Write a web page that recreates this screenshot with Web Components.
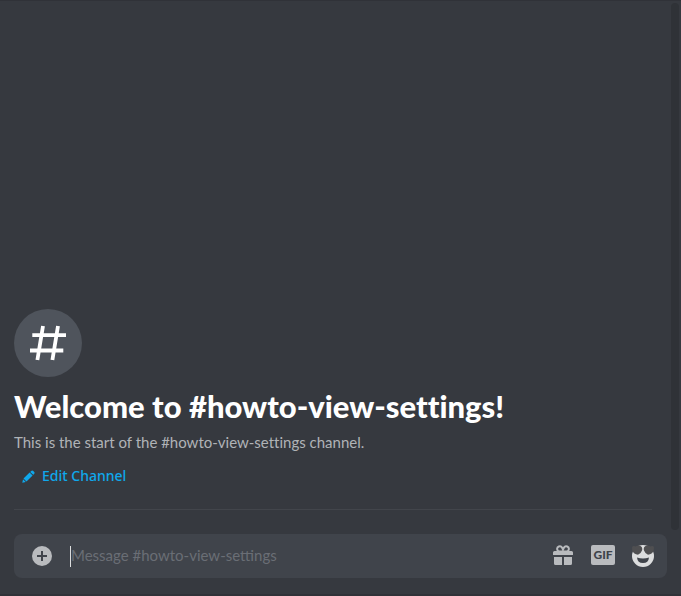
<!DOCTYPE html>
<html lang="en">
<head>
<meta charset="utf-8">
<title>howto-view-settings</title>
<style>
html, body { height: 100%; margin: 0; background: #36393f; }
body { font-family: Lato, "Noto Sans", sans-serif; font-variant-ligatures: none; }
</style>
</head>
<body>
<channel-page></channel-page>
<script>
const define = (name, html) => {
  const template = document.createElement('template');
  template.innerHTML = html;
  customElements.define(name, class extends HTMLElement {
    constructor() {
      super();
      this.attachShadow({ mode: 'open' }).append(template.content.cloneNode(true));
    }
  });
};

define('channel-badge', `
<style>
:host { display: grid; place-items: center; width: 68px; height: 68px; border-radius: 50%; background: #4f545c; }
svg { display: block; }
</style>
<svg width="40" height="40" viewBox="0 0 40 40" fill="none" stroke="#fff" stroke-width="3.8" aria-hidden="true">
  <path d="M15 3 L9.4 37 M30 3 L24.4 37 M4.3 12.2 H38 M2 27.5 H35.300"/>
</svg>`);

define('edit-button', `
<style>
:host { display: block; }
button { display: flex; align-items: center; gap: 7px; margin: 0; padding: 0 8px; height: 32px; border: 0; background: none; color: #0fa8ec; font: 500 14px/20px "Noto Sans", sans-serif; cursor: pointer; }
</style>
<button type="button">
  <svg width="13" height="13" viewBox="0 0 13 13" fill="currentColor" aria-hidden="true">
    <path d="M9.2 1.1 Q10.2 0 11.3 1 L12.2 1.9 Q13.1 2.9 12.1 3.9 L11.2 4.8 L8.2 1.9Z M7.6 2.5 L10.6 5.5 L4.5 11.5 L1.5 8.5Z M1 9.2 L3.8 12 L.3 12.7Z"/>
  </svg>
  <slot></slot>
</button>`);

define('channel-welcome', `
<style>
:host { display: block; border-bottom: 1px solid #42454b; }
h1 { margin: 9px 0 0; color: #fff; font-weight: 900; font-size: 31px; line-height: 40px; }
p { margin: 6px 0 0; color: #b0b3b7; font-size: 15px; line-height: 20px; }
edit-button { margin: 8px 0 17px; }
</style>
<channel-badge></channel-badge>
<h1><slot name="title"></slot></h1>
<p><slot name="note"></slot></p>
<edit-button>Edit Channel</edit-button>`);

define('scroll-track', `
<style>
:host { display: block; width: 8px; border-radius: 4px; background: #2f3237; }
</style>`);

define('message-composer', `
<style>
:host { display: flex; align-items: center; height: 44px; padding: 0 12px 0 18px; border-radius: 8px; background: #40444b; color: #b9bbbe; }
button { display: grid; justify-items: center; margin: 0; padding: 0; border: 0; background: none; color: inherit; cursor: pointer; }
svg { display: block; }
.attach { margin-right: 18px; }
input { box-sizing: border-box; flex: 1; min-width: 0; height: 21px; padding: 0 0 2px; border: 0; border-left: 1px solid #dcddde; outline: 0; background: none; color: #dcddde; font-family: inherit; font-size: 15px; }
input::placeholder { color: #6a6e75; opacity: 1; }
.tools { display: flex; align-items: flex-start; gap: 16px; margin-left: 16px; }
.tools button { width: 24px; }
.tools .gif { display: block; height: 20px; border-radius: 2px; background: #b9bbbe; color: #40444b; font: 900 12px/20px Lato, sans-serif; text-align: center; }
</style>
<button class="attach" type="button" aria-label="Attach">
  <svg width="20" height="20" viewBox="0 0 20 20"><circle cx="10" cy="10" r="10" fill="currentColor"/><path d="M10 5V15M5 10H15" stroke="#40444b" stroke-width="2"/></svg>
</button>
<input type="text" placeholder="Message #howto-view-settings" aria-label="Message #howto-view-settings">
<div class="tools">
  <button type="button" aria-label="Send a gift">
    <svg width="20" height="20" viewBox="0 0 20 20" fill="currentColor">
      <path d="M1 12H9V20H2.5Q1 20 1 18.5Z M11 12H19V18.5Q19 20 17.5 20H11Z M1.5 6H18.5Q20 6 20 7.5V10H0V7.5Q0 6 1.5 6Z"/>
      <path d="M9.5 6.500H6.800A2.600 2.600 0 1 1 9 2.600L10 4.500L11 2.600A2.600 2.600 0 1 1 13.200 6.500H10.500" fill="none" stroke="currentColor" stroke-width="2"/>
    </svg>
  </button>
  <button class="gif" type="button">GIF</button>
  <button type="button" aria-label="Select emoji">
    <svg width="22" height="22" viewBox="0 0 22 22">
      <circle cx="11" cy="11" r="11" fill="#dcddde"/>
      <path d="M5 12.500Q11 14.500 17 12.500Q16.500 18 11 18Q5.500 18 5 12.500Z" fill="#40444b"/>
      <path d="M0 2Q1 .3 4 1.500Q7-.5 9.200 1.500Q10.800 3 10 5.500Q9 8.500 6 9.800Q1.800 9 .3 6Z M22 2Q21 .3 18 1.500Q15-.5 12.800 1.500Q11.200 3 12 5.500Q13 8.500 16 9.800Q20.200 9 21.700 6Z" fill="#4f4f51"/>
    </svg>
  </button>
</div>`);

define('channel-page', `
<style>
:host { display: flex; flex-direction: column; box-sizing: border-box; min-height: 100vh; padding: 2px 0 16px; border: solid #303238; border-width: 1px 0 2px; background: #36393f; }
main { display: flex; flex: 1; gap: 19px; padding: 0 2px 0 14px; }
channel-welcome { flex: 1; align-self: flex-end; margin-bottom: 20px; }
message-composer { margin: 4px 14px 0; }
</style>
<main>
  <channel-welcome>
    <span slot="title">Welcome to #howto-view-settings!</span>
    <span slot="note">This is the start of the #howto-view-settings channel.</span>
  </channel-welcome>
  <scroll-track></scroll-track>
</main>
<message-composer></message-composer>`);
</script>
</body>
</html>
